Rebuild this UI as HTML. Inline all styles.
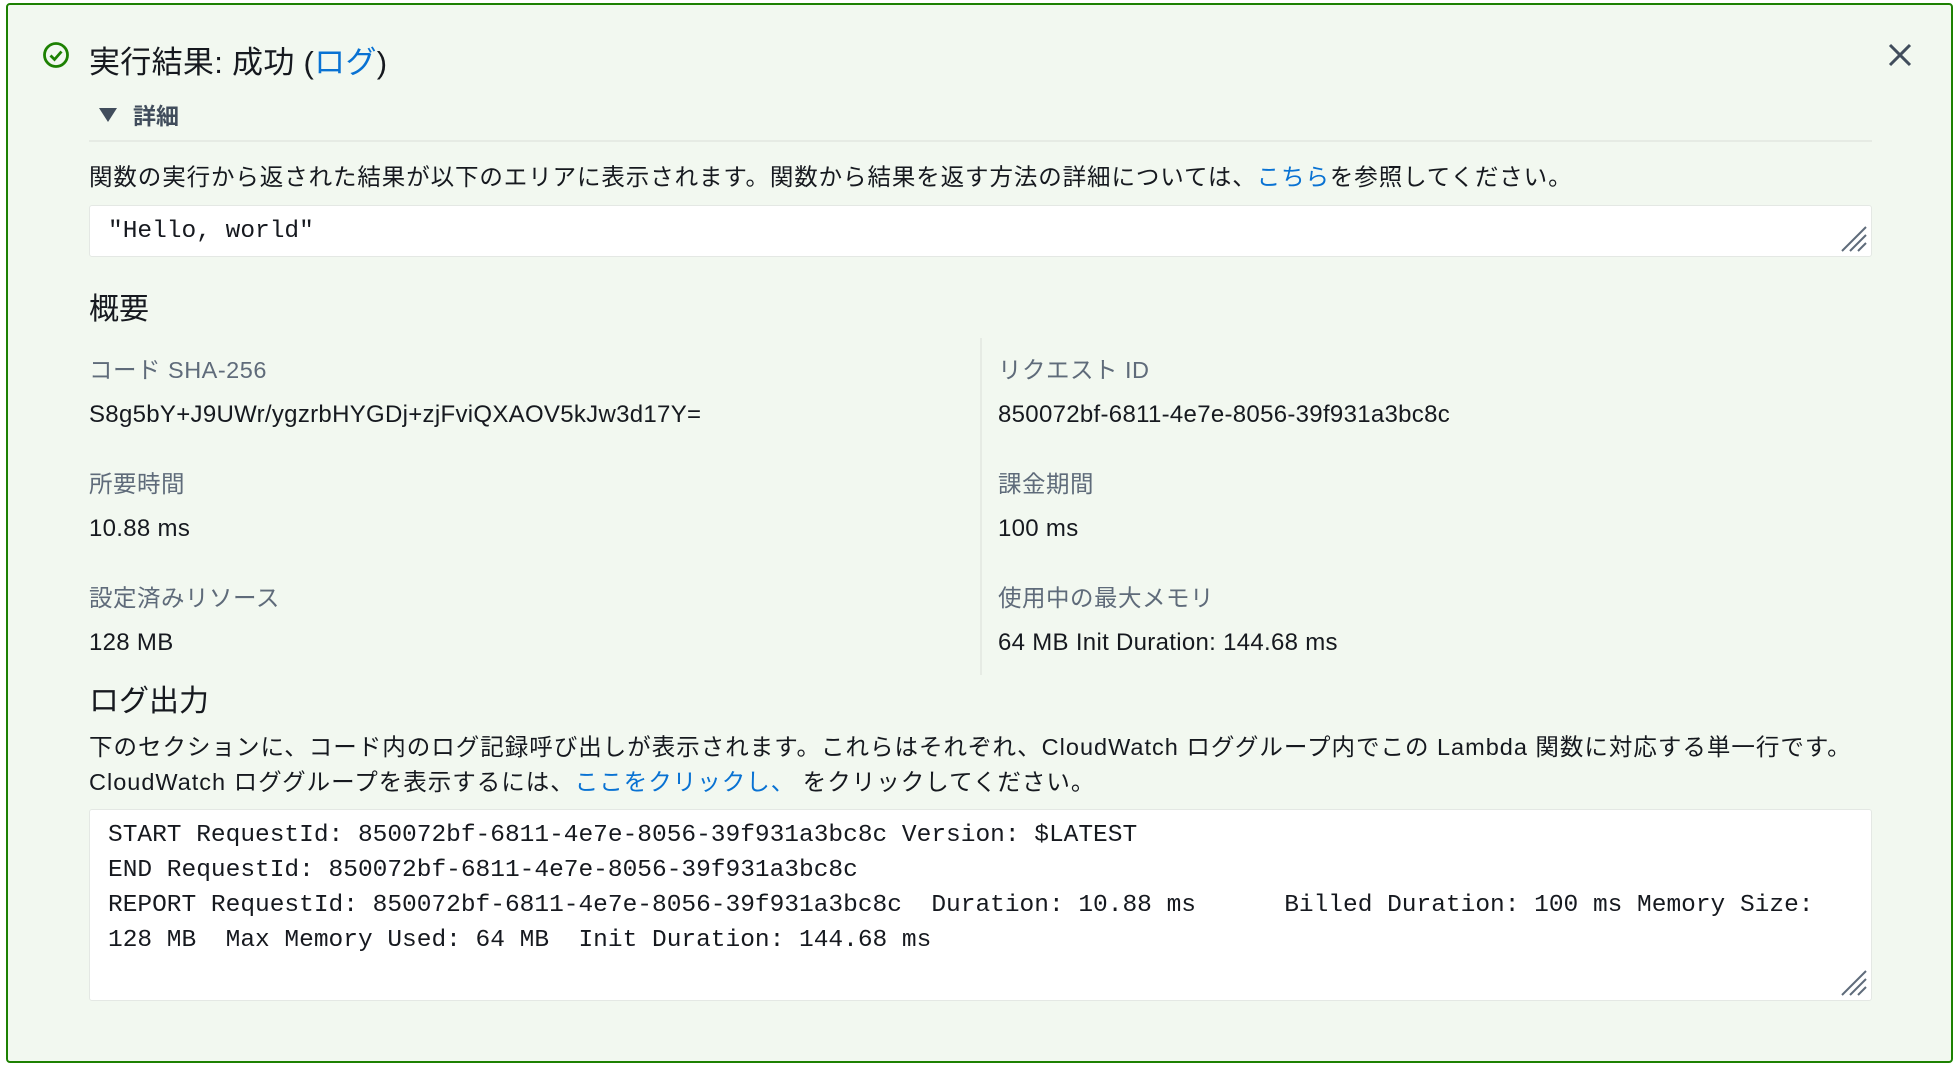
<!DOCTYPE html>
<html><head><meta charset="utf-8"><style>
*{margin:0;padding:0;box-sizing:border-box}
body{width:1960px;height:1070px;background:#fff;font-family:"Liberation Sans","Noto Sans CJK JP",sans-serif;color:#16191f;position:relative;overflow:hidden}
.panel{position:absolute;left:6px;top:3px;width:1947px;height:1060px;border:2.5px solid #1d8102;border-radius:4px;background:#f2f8f0}
.a{position:absolute;white-space:nowrap}
a{color:#0972d3;text-decoration:none}
.lbl{color:#5f6b7a;font-size:23.5px;letter-spacing:0.5px}
.val{font-size:24px;color:#16191f;letter-spacing:0.3px}
.box{position:absolute;left:89px;width:1783px;background:#fff;border:1.5px solid #e4e8e4;border-radius:3px}
.mono{font-family:"Liberation Mono",monospace;font-size:24.5px;color:#16191f}
.rz{position:absolute;right:4px;bottom:4px}
</style></head><body>
<div class="panel"></div>
<svg class="a" style="left:42px;top:41px" width="28" height="28" viewBox="0 0 28 28"><circle cx="14" cy="14" r="11.5" fill="none" stroke="#1d8102" stroke-width="2.8"/><path d="M8.5 14.5l4 4 7-8" fill="none" stroke="#1d8102" stroke-width="2.8"/></svg>
<div class="a" style="left:89px;top:43px;font-size:31px;line-height:40px;letter-spacing:0.3px">実行結果: 成功 (<a>ログ</a>)</div>
<svg class="a" style="left:1888px;top:43px" width="24" height="24" viewBox="0 0 24 24"><path d="M2 2L22 22M22 2L2 22" stroke="#414d5c" stroke-width="3"/></svg>
<svg class="a" style="left:98px;top:107px" width="20" height="16" viewBox="0 0 20 16"><path d="M1 1H19L10 15Z" fill="#414d5c"/></svg>
<div class="a" style="left:133px;top:101px;font-size:23px;font-weight:bold;color:#414d5c;line-height:30px">詳細</div>
<div class="a" style="left:89px;top:140px;width:1783px;height:1.5px;background:#e6ebe4"></div>
<div class="a" style="left:89px;top:162px;font-size:23.5px;line-height:30px;letter-spacing:0.9px">関数の実行から返された結果が以下のエリアに表示されます。関数から結果を返す方法の詳細については、<a>こちら</a>を参照してください。</div>
<div class="box" style="top:205px;height:52px"><div class="a mono" style="left:18px;top:12px">"Hello, world"</div>
<svg class="rz" width="26" height="26" viewBox="0 0 26 26"><path d="M25 1L1 25M25 9L9 25M25 17L17 25" stroke="#5f6b7a" stroke-width="2"/></svg></div>
<div class="a" style="left:89px;top:290px;font-size:30px;line-height:40px">概要</div>
<div class="a" style="left:980px;top:338px;width:1.5px;height:337px;background:#e6ebe4"></div>
<div class="a lbl" style="left:89px;top:351px">コード SHA-256</div>
<div class="a val" style="left:89px;top:401px">S8g5bY+J9UWr/ygzrbHYGDj+zjFviQXAOV5kJw3d17Y=</div>
<div class="a lbl" style="left:89px;top:465px">所要時間</div>
<div class="a val" style="left:89px;top:515px">10.88 ms</div>
<div class="a lbl" style="left:89px;top:579px">設定済みリソース</div>
<div class="a val" style="left:89px;top:629px">128 MB</div>
<div class="a lbl" style="left:998px;top:351px">リクエスト ID</div>
<div class="a val" style="left:998px;top:401px">850072bf-6811-4e7e-8056-39f931a3bc8c</div>
<div class="a lbl" style="left:998px;top:465px">課金期間</div>
<div class="a val" style="left:998px;top:515px">100 ms</div>
<div class="a lbl" style="left:998px;top:579px">使用中の最大メモリ</div>
<div class="a val" style="left:998px;top:629px">64 MB Init Duration: 144.68 ms</div>
<div class="a" style="left:89px;top:682px;font-size:30px;line-height:40px">ログ出力</div>
<div class="a" style="left:89px;top:730px;font-size:23.5px;line-height:35px;letter-spacing:1.0px">下のセクションに、コード内のログ記録呼び出しが表示されます。これらはそれぞれ、CloudWatch ロググループ内でこの Lambda 関数に対応する単一行です。<br>CloudWatch ロググループを表示するには、<a>ここをクリックし、</a> をクリックしてください。</div>
<div class="box" style="top:809px;height:192px"><div class="a mono" style="left:18px;top:8px;line-height:35px;white-space:pre">START RequestId: 850072bf-6811-4e7e-8056-39f931a3bc8c Version: $LATEST
END RequestId: 850072bf-6811-4e7e-8056-39f931a3bc8c
REPORT RequestId: 850072bf-6811-4e7e-8056-39f931a3bc8c  Duration: 10.88 ms      Billed Duration: 100 ms Memory Size:
128 MB  Max Memory Used: 64 MB  Init Duration: 144.68 ms</div>
<svg class="rz" width="26" height="26" viewBox="0 0 26 26"><path d="M25 1L1 25M25 9L9 25M25 17L17 25" stroke="#5f6b7a" stroke-width="2"/></svg></div>
</body></html>
